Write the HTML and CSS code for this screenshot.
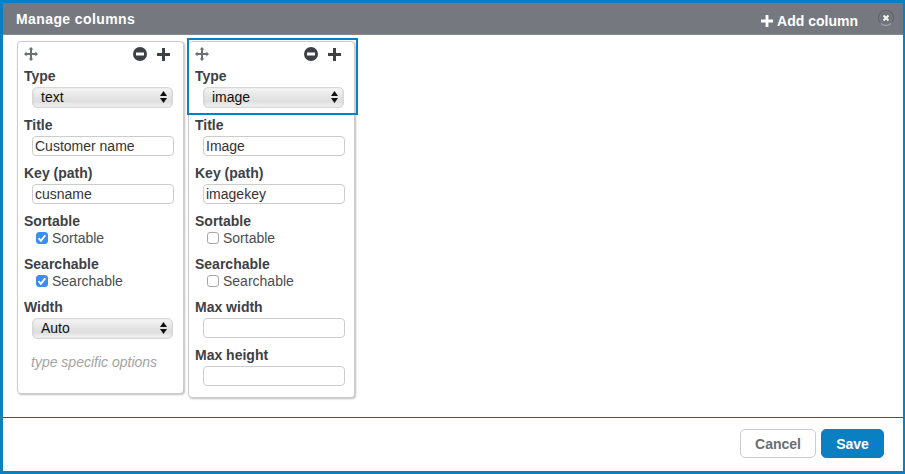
FILE: index.html
```html
<!DOCTYPE html>
<html lang="en">
<head>
<meta charset="utf-8">
<title>Manage columns</title>
<link rel="stylesheet" href="styles.css">
</head>
<body>
<div class="dialog">
  <header class="head">
    <h1 class="title">Manage columns</h1>
    <div class="head-actions">
      <span class="add">
        <svg class="add-icon" viewBox="0 0 12 12"><path d="M4.6 0h2.8v4.6H12v2.8H7.4V12H4.6V7.4H0V4.6h4.6z"/></svg>
        Add column
      </span>
      <span class="close"><svg viewBox="0 0 8 8"><path d="M1.5 1.5l5 5M6.5 1.5l-5 5"/></svg></span>
    </div>
  </header>
  <main class="body">
    <section class="card card-a">
      <div class="tools">
        <svg class="move" viewBox="0 0 14 14"><path d="M7 0l2.4 2.6H8v3.4h3.4V4.6L14 7l-2.6 2.4V8H8v3.4h1.4L7 14l-2.4-2.6H6V8H2.6v1.4L0 7l2.6-2.4V6H6V2.6H4.6z"/></svg>
        <span class="tool-right">
          <svg class="minus" viewBox="0 0 14 14"><path fill-rule="evenodd" d="M7 0a7 7 0 1 1 0 14A7 7 0 0 1 7 0zM3 5.6v2.8h8V5.6z"/></svg>
          <svg class="plus" viewBox="0 0 13 13"><path d="M5 0h3v5h5v3H8v5H5V8H0V5h5z"/></svg>
        </span>
      </div>
      <label class="lbl lbl-type">Type</label>
      <div class="sel">text<svg class="arrows" viewBox="0 0 7 12"><path d="M3.5 0L7 5H0zM3.5 12L0 7h7z"/></svg></div>
      <label class="lbl">Title</label>
      <input class="txt" type="text" value="Customer name">
      <label class="lbl">Key (path)</label>
      <input class="txt" type="text" value="cusname">
      <label class="lbl">Sortable</label>
      <div class="chk"><span class="box on"><svg viewBox="0 0 12 12"><path d="M2.5 6.2l2.4 2.6 4.4-5.6"/></svg></span>Sortable</div>
      <label class="lbl">Searchable</label>
      <div class="chk"><span class="box on"><svg viewBox="0 0 12 12"><path d="M2.5 6.2l2.4 2.6 4.4-5.6"/></svg></span>Searchable</div>
      <label class="lbl">Width</label>
      <div class="sel">Auto<svg class="arrows" viewBox="0 0 7 12"><path d="M3.5 0L7 5H0zM3.5 12L0 7h7z"/></svg></div>
      <p class="hint">type specific options</p>
    </section>
    <section class="card card-b">
      <div class="focus"></div>
      <div class="tools">
        <svg class="move" viewBox="0 0 14 14"><path d="M7 0l2.4 2.6H8v3.4h3.4V4.6L14 7l-2.6 2.4V8H8v3.4h1.4L7 14l-2.4-2.6H6V8H2.6v1.4L0 7l2.6-2.4V6H6V2.6H4.6z"/></svg>
        <span class="tool-right">
          <svg class="minus" viewBox="0 0 14 14"><path fill-rule="evenodd" d="M7 0a7 7 0 1 1 0 14A7 7 0 0 1 7 0zM3 5.6v2.8h8V5.6z"/></svg>
          <svg class="plus" viewBox="0 0 13 13"><path d="M5 0h3v5h5v3H8v5H5V8H0V5h5z"/></svg>
        </span>
      </div>
      <label class="lbl lbl-type">Type</label>
      <div class="sel">image<svg class="arrows" viewBox="0 0 7 12"><path d="M3.5 0L7 5H0zM3.5 12L0 7h7z"/></svg></div>
      <label class="lbl">Title</label>
      <input class="txt" type="text" value="Image">
      <label class="lbl">Key (path)</label>
      <input class="txt" type="text" value="imagekey">
      <label class="lbl">Sortable</label>
      <div class="chk"><span class="box"></span>Sortable</div>
      <label class="lbl">Searchable</label>
      <div class="chk"><span class="box"></span>Searchable</div>
      <label class="lbl">Max width</label>
      <input class="txt" type="text">
      <label class="lbl">Max height</label>
      <input class="txt" type="text">
    </section>
  </main>
  <footer class="foot">
    <button class="btn btn-cancel" type="button">Cancel</button>
    <button class="btn btn-save" type="button">Save</button>
  </footer>
</div>
</body>
</html>
```
FILE: styles.css
```css
* { box-sizing: border-box; }
html, body { margin: 0; padding: 0; background: #fff; }
body { font-family: "Liberation Sans", Arial, sans-serif; color: #3d4146; }
.dialog {
  width: 905px; height: 474px;
  display: flex; flex-direction: column;
  border: solid #0a7fc1;
  border-width: 3px 2px 3px 3px;
  background: #fff;
}
.head {
  height: 32px; flex: none;
  background: #75787f;
  border-bottom: 1px solid #85888e;
  display: flex; align-items: center; justify-content: space-between;
  padding: 0 9px 0 13px;
  color: #fff;
}
.title { margin: 0; font-size: 14px; font-weight: bold; letter-spacing: .4px; }
.head-actions { display: flex; align-items: center; gap: 20px; }
.add { display: flex; align-items: center; gap: 4px; font-size: 14px; font-weight: bold; position: relative; top: 2px; }
.add-icon { width: 12px; height: 12px; fill: #fff; }
.close {
  width: 16px; height: 16px; border-radius: 50%;
  background: #6f7278;
  border: 1px solid #5f6268;
  border-bottom-color: #a5a7ab;
  box-shadow: inset 0 0 2px rgba(255,255,255,.25);
  display: flex; align-items: center; justify-content: center;
  position: relative; top: -1px;
}
.close svg { width: 8px; height: 8px; fill: none; stroke: #f4f4f4; stroke-width: 2; }
.body {
  flex: 1; display: flex; align-items: flex-start; gap: 4px;
  padding: 6px 0 0 14px;
}
.card {
  position: relative;
  width: 167px;
  background: #fff;
  border: 1px solid #ccc;
  border-radius: 4px;
  box-shadow: 1px 1px 2px rgba(0,0,0,.25);
  padding: 5px 8px 0 6px;
}
.card-a { height: 353px; }
.card-b { height: 357px; }
.focus {
  position: absolute; left: -2px; top: -4px;
  width: 171px; height: 77px;
  border: 2px solid #0a7fc1;
  pointer-events: none;
}
.tools { display: flex; align-items: center; justify-content: space-between; height: 14px; padding-right: 5px; }
.tool-right { display: flex; align-items: center; gap: 10px; }
.move { width: 14px; height: 14px; fill: #6b7075; }
.minus { width: 14px; height: 14px; fill: #3d4146; }
.plus { width: 13px; height: 13px; fill: #3d4146; }
.lbl { display: block; font-size: 14px; font-weight: bold; line-height: 16px; margin-top: 9px; }
.lbl-type { margin-top: 7px; }
.sel {
  position: relative;
  margin: 3px 0 0 8px;
  width: 141px; height: 21px;
  border-radius: 5px;
  background: linear-gradient(#f6f6f6 0, #e8e8e8 35%, #dedede 70%, #f4f4f4 100%);
  border: 1px solid #d8d8d8;
  box-shadow: inset 0 0 2px rgba(0,0,0,.12);
  color: #111;
  font-size: 14px; line-height: 19px;
  padding-left: 8px;
}
.arrows { position: absolute; right: 5px; top: 3px; width: 7px; height: 12px; fill: #111; }
.txt {
  display: block;
  margin: 3px 0 0 8px;
  width: 142px; height: 20px;
  border: 1px solid #ccc;
  border-radius: 4px;
  background: #fff;
  padding: 0 2px 0 2px;
  font: 14px "Liberation Sans", Arial, sans-serif;
  color: #333;
  outline: 0;
}
.chk { display: flex; align-items: center; gap: 4px; margin: 0 0 0 12px; height: 18px; font-size: 14px; color: #4a4d52; }
.box {
  width: 12px; height: 12px;
  border: 1px solid #a8a8a8;
  border-radius: 3px;
  background: #fff;
  display: block;
  flex: none;
}
.box svg { display: block; width: 12px; height: 12px; margin: -1px; fill: none; stroke: #fff; stroke-width: 1.8; }
.box.on { background: #3b8df1; border-color: #3b8df1; }
.hint { margin: 15px 0 0 7px; font-size: 14px; font-style: italic; line-height: 16px; color: #a3a3a3; }
.foot {
  height: 54px; flex: none;
  border-top: 1px solid #1d5f85;
  display: flex; align-items: flex-start; justify-content: flex-end; gap: 5px;
  padding: 11px 19px 0 0;
}
.btn {
  height: 29px; border-radius: 5px;
  font: bold 14px "Liberation Sans", Arial, sans-serif;
  padding: 0;
}
.btn-cancel { width: 76px; background: #fff; border: 1px solid #ccc; color: #6b6e72; }
.btn-save { width: 63px; background: #0a7fc1; border: 1px solid #0a7fc1; color: #fff; }
```
